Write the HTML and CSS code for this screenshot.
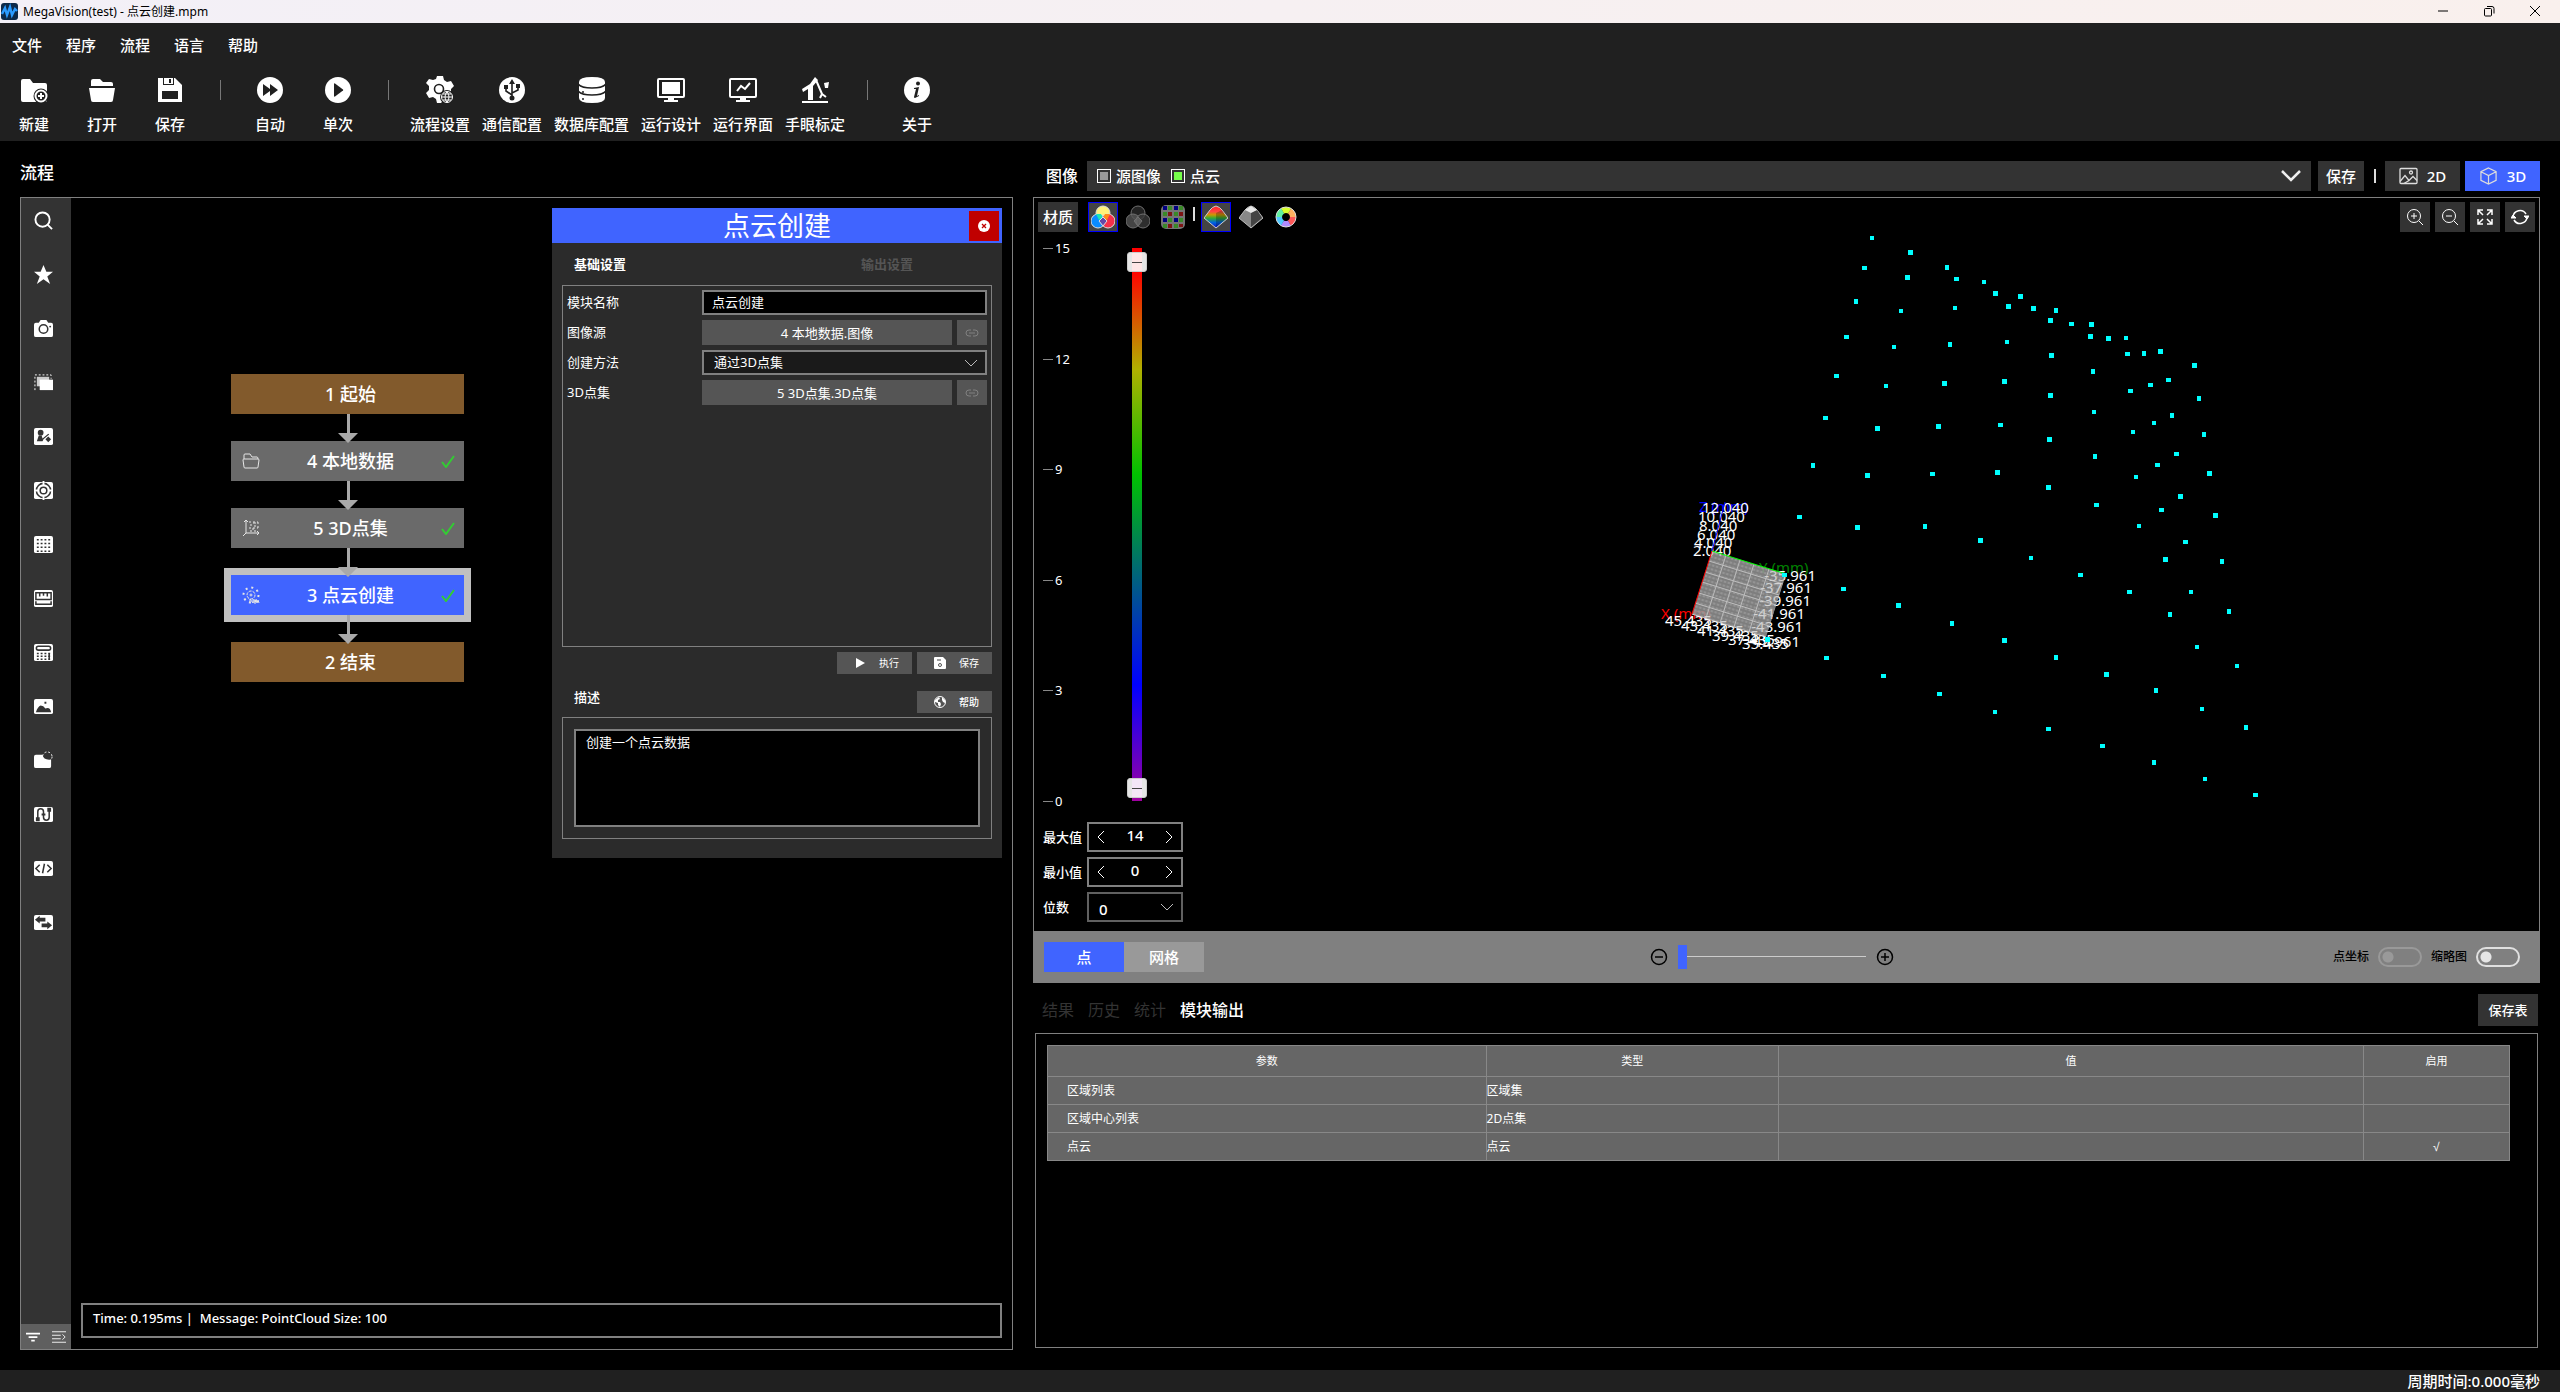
FILE: index.html
```html
<!DOCTYPE html>
<html lang="zh-CN">
<head>
<meta charset="UTF-8">
<meta name="viewport" content="width=device-width, initial-scale=1.0">
<title>MegaVision(test) - 点云创建.mpm</title>
<link rel="stylesheet" href="styles.css">
</head>
<body>
<div class="titlebar">
  <svg class="app-icon" viewBox="0 0 17 17"><rect width="17" height="17" rx="3" fill="#0d2a4a"/><path d="M1 11l3-6 2 7 3-8 2 8 3-6 2 2" fill="none" stroke="#2b9bff" stroke-width="2.4"/></svg>
  <span class="app-title">MegaVision(test) - 点云创建.mpm</span>
  <button class="win-btn" aria-label="最小化"><svg viewBox="0 0 12 12"><path d="M1 6h10"/></svg></button>
  <button class="win-btn" aria-label="还原"><svg viewBox="0 0 12 12"><rect x="1.500" y="3.500" width="7" height="7.500" rx="1"/><path d="M4 1.500h5q2 0 2 2v5"/></svg></button>
  <button class="win-btn" aria-label="关闭"><svg viewBox="0 0 12 12"><path d="M1 1l10 10M11 1L1 11"/></svg></button>
</div>

<header class="header">
  <nav class="menu">
    <button>文件</button><button>程序</button><button>流程</button><button>语言</button><button>帮助</button>
  </nav>
  <div class="toolbar">
    <button class="tool"><svg viewBox="0 0 28 28"><path class="f" d="M1 5q0-2 2-2h7l3 4h12q2 0 2 2v15q0 2-2 2H3q-2 0-2-2z"/><circle cx="21" cy="20" r="7.500" class="d"/><circle cx="21" cy="20" r="5.500" class="w2"/><path class="w2" d="M21 17v6M18 20h6"/></svg><span>新建</span></button>
    <button class="tool"><svg viewBox="0 0 28 28"><path class="f" d="M3 10V5q0-2 2-2h7l3 3h8q2 0 2 2v2zM1 12h26l-2 12q0 2-2 2H5q-2 0-2-2z"/></svg><span>打开</span></button>
    <button class="tool"><svg viewBox="0 0 28 28"><path class="f" d="M2 2h17l7 7v17H2z"/><path class="d" d="M7 2h11v7H7zM6 15h16v8H6z"/><path class="f" d="M8 2h9v6H8z"/><path class="d" d="M13 3h2v4h-2z"/></svg><span>保存</span></button>
    <i class="sep"></i>
    <button class="tool"><svg viewBox="0 0 28 28"><circle class="f" cx="14" cy="14" r="13"/><path class="d" d="M7 8l7 5V8l8 6-8 6v-5l-7 5z"/></svg><span>自动</span></button>
    <button class="tool"><svg viewBox="0 0 28 28"><circle class="f" cx="14" cy="14" r="13"/><path class="d" d="M10 8q0-1 1-.5l8 6q.5.5 0 1l-8 6q-1 .5-1-.5z"/></svg><span>单次</span></button>
    <i class="sep"></i>
    <button class="tool"><svg viewBox="0 0 28 28"><path class="f" d="M11 0h6l1 4 3 2 4-1 3 5-3 3v3l-10 11H11l-1-4-3-2-4 1-3-5 3-3v-4L0 7l3-4 4 1 3-1z"/><circle class="s" cx="13" cy="13" r="4.500"/><circle cx="21" cy="21" r="7" class="d"/><circle cx="21" cy="21" r="5.500" class="w"/><path class="w" d="M15.500 21h11M21 15.500q-4 5.500 0 11q4-5.500 0-11M17 18h8M17 24h8"/></svg><span>流程设置</span></button>
    <button class="tool"><svg viewBox="0 0 28 28"><circle class="f" cx="14" cy="14" r="13"/><path class="s" d="M14 5v18M14 19l-6-4v-4M14 17l6-3v-3"/><path class="d" d="M14 3l3 5h-6zM6 9h4v4H6zM18 8h4v4h-4z"/><circle class="d" cx="14" cy="22" r="2.500"/></svg><span>通信配置</span></button>
    <button class="tool"><svg viewBox="0 0 28 28"><path class="f" d="M1 6q0-5 13-5t13 5v16q0 5-13 5T1 22z"/><path class="s" d="M0 8q3 4 14 4t14-4M0 15q3 4 14 4t14-4"/><circle class="d" cx="5" cy="16" r="1"/><circle class="d" cx="5" cy="23" r="1"/></svg><span>数据库配置</span></button>
    <button class="tool"><svg viewBox="0 0 28 28"><rect class="w2" x="1" y="3" width="26" height="18" rx="1"/><path class="f" d="M5 6h18v12H5zM11 21h6v3h4v2H7v-2h4z"/></svg><span>运行设计</span></button>
    <button class="tool"><svg viewBox="0 0 28 28"><rect class="w2" x="1" y="3" width="26" height="18" rx="1"/><path class="w2" d="M8 15l4-5 4 3 5-6"/><path class="f" d="M11 21h6v3h4v2H7v-2h4z"/></svg><span>运行界面</span></button>
    <button class="tool"><svg viewBox="0 0 28 28"><path class="f" d="M14 1l3 3-5 6v14h-5V13l-5 3-1-3 8-5zM1 25h26v2H1z"/><path class="w2" d="M15 4l6 14M21 18l-2 4M21 18l4 3"/><path class="f" d="M23 7l5-1-1 6h-3z"/></svg><span>手眼标定</span></button>
    <i class="sep"></i>
    <button class="tool"><svg viewBox="0 0 28 28"><circle class="f" cx="14" cy="14" r="13"/><circle class="d" cx="15" cy="7.500" r="2"/><path class="d" d="M11 12l5-1-2 9 2-1v1l-4 2q-1 0-1-1l2-8h-2z"/></svg><span>关于</span></button>
  </div>
</header>

<main class="main">
  <section class="flow">
    <h2 class="heading">流程</h2>
    <div class="flow-frame">
      <aside class="side">
        <div class="side-tools">
          <button aria-label="搜索"><svg viewBox="0 0 20 20"><circle class="w2" cx="9" cy="9" r="7.500"/><path class="w2" d="M14 14l5 5"/></svg></button>
          <button aria-label="收藏"><svg viewBox="0 0 20 20"><path class="f" d="M10 0l3 7h7l-6 5 3 8-7-5-7 5 3-8-6-5h7z"/></svg></button>
          <button aria-label="相机"><svg viewBox="0 0 20 20"><path class="f" d="M2 4h3l2-3h6l2 3h3q2 0 2 2v11q0 2-2 2H2q-2 0-2-2V6q0-2 2-2z"/><circle class="s" cx="10" cy="10.500" r="4.500"/><circle class="d" cx="17" cy="8" r="1"/></svg></button>
          <button aria-label="区域"><svg viewBox="0 0 20 20"><path class="w dash" d="M1 18V2h17v4"/><path d="M3 4h13v10H3z" fill="#ccc"/><path class="f" d="M6 7h14v11H6z"/></svg></button>
          <button aria-label="标定"><svg viewBox="0 0 20 20"><rect class="f" y="1" width="20" height="18" rx="2"/><circle class="d" cx="7" cy="6" r="3"/><path class="d" d="M3 15l2-6h3l1 3 6-5 1 1-6 5-1 2zM15 10l3 3-3 3-3-3z"/></svg></button>
          <button aria-label="定位"><svg viewBox="0 0 20 20"><rect class="f" y="1" width="20" height="18" rx="2"/><circle class="s" cx="10" cy="10" r="7.500"/><circle class="s" cx="10" cy="10" r="3.500"/><path class="w2" d="M10 0v5M10 15v5M0 10h5M15 10h5"/></svg></button>
          <button aria-label="网格"><svg viewBox="0 0 20 20"><rect class="f" y="1" width="20" height="18" rx="2"/><path class="s dots" d="M3 5h15M3 9h15M3 13h15M3 17h15"/></svg></button>
          <button aria-label="测量"><svg viewBox="0 0 20 20"><rect class="f" y="1" width="20" height="18" rx="2"/><path class="s" d="M2 4h16v7H2zM2 13v3h16v-3M6 4v4M10 4v3M14 4v4"/></svg></button>
          <button aria-label="计算"><svg viewBox="0 0 20 20"><rect class="f" y="1" width="20" height="18" rx="2"/><rect class="s" x="2.500" y="3.500" width="15" height="4" rx="2"/><path class="s dots" d="M3 11h15M3 14h15M3 17h15"/><path class="s" d="M16 11v6"/></svg></button>
          <button aria-label="图像"><svg viewBox="0 0 20 20"><rect class="f" y="2" width="20" height="16" rx="2"/><path class="d" d="M2 16q2-6 5-7 3 0 5 3 5-2 6 4zM11 5h2v2h-2z"/></svg></button>
          <button aria-label="缺陷"><svg viewBox="0 0 20 20"><path class="f" d="M2 4h7q1 6 9 5v7q0 2-2 2H2q-2 0-2-2V6q0-2 2-2z"/><circle class="w dots" cx="14" cy="6" r="5"/></svg></button>
          <button aria-label="流程控制"><svg viewBox="0 0 20 20"><rect class="f" y="2" width="20" height="16" rx="2"/><path class="s" d="M4 15V7q0-3 3-3t3 3v6q0 3 3 3t3-3V5"/><path class="d" d="M2 13h4v4H2zM14 3h4v4h-4zM8 9h4v2H8z"/></svg></button>
          <button aria-label="脚本"><svg viewBox="0 0 20 20"><rect class="f" y="2" width="20" height="16" rx="2"/><path class="s" d="M6 6l-4 4 4 4M14 6l4 4-4 4M11 5l-2 10"/></svg></button>
          <button aria-label="通信"><svg viewBox="0 0 20 20"><rect class="f" y="2" width="20" height="16" rx="2"/><path class="d" d="M1 7l5-4v2h6v4H6v2zM19 13l-5-4v2H8v4h6v2z"/></svg></button>
        </div>
        <div class="side-foot">
          <button aria-label="筛选"><svg viewBox="0 0 16 16"><path class="w2" d="M0 4h16M3 8h10M6 12h4"/></svg></button>
          <button aria-label="展开"><svg viewBox="0 0 16 16"><path class="w" d="M0 2h16M0 6h10M0 10h10M0 14h16M12 5l3 3-3 3"/></svg></button>
        </div>
      </aside>
      <div class="canvas">
        <div class="nodes">
          <div class="node edge"><span>1 起始</span></div>
          <svg class="arrow" viewBox="0 0 20 29"><path d="M9 0h3v19h8L10 29 0 19h9z"/></svg>
          <div class="node"><svg class="node-icon" viewBox="0 0 18 18"><path d="M2 7V3q0-1 1-1h5l2 3h5q1 0 1 2M2 7h14q1 0 1 1l-1 7q0 1-1 1H3q-1 0-1-1L1 8q0-1 1-1z"/></svg><span>4 本地数据</span><svg class="tick" viewBox="0 0 14 13"><path d="M1 7l4 5L13 1"/></svg></div>
          <svg class="arrow" viewBox="0 0 20 29"><path d="M9 0h3v19h8L10 29 0 19h9z"/></svg>
          <div class="node"><svg class="node-icon" viewBox="0 0 18 18"><path d="M4 1v13h13M4 14l-3 3M2 3l2-2 2 2M15 12l2 2-2 2M8 6h2M12 7h2M10 10h2M11 4h3"/><path class="dots" d="M7 3h9M7 9h9M8 12h6M16 3v8"/></svg><span>5 3D点集</span><svg class="tick" viewBox="0 0 14 13"><path d="M1 7l4 5L13 1"/></svg></div>
          <svg class="arrow" viewBox="0 0 20 29"><path d="M9 0h3v19h8L10 29 0 19h9z"/></svg>
          <div class="node active"><svg class="node-icon" viewBox="0 0 18 18"><circle cx="9" cy="9" r="4" stroke-dasharray="3 1"/><circle cx="9" cy="9" r="1"/><circle cx="9" cy="9" r="7.500" stroke-width="2" stroke-dasharray="2 3.900"/><path d="M8 17v-4l3 4v-4M12 13v4h2M12 15h2M14 13l1 4 1-3 1 3"/></svg><span>3 点云创建</span><svg class="tick" viewBox="0 0 14 13"><path d="M1 7l4 5L13 1"/></svg></div>
          <svg class="arrow" viewBox="0 0 20 29"><path d="M9 0h3v19h8L10 29 0 19h9z"/></svg>
          <div class="node edge"><span>2 结束</span></div>
        </div>

        <div class="dialog">
          <div class="dialog-head">
            <h3>点云创建</h3>
            <button class="close" aria-label="关闭"><svg viewBox="0 0 12 12"><circle cx="6" cy="6" r="6" fill="#fff"/><path d="M4 4l4 4M8 4l-4 4" stroke="#c00000" stroke-width="1.300"/></svg></button>
          </div>
          <div class="dialog-tabs"><button class="on">基础设置</button><button>输出设置</button></div>
          <div class="form">
            <label for="modname">模块名称</label>
            <input id="modname" class="wide" type="text" value="点云创建">
            <label for="imgsrc">图像源</label>
            <button id="imgsrc" class="pick">4 本地数据.图像</button>
            <button class="link" aria-label="链接图像源"><svg viewBox="0 0 14 10"><path d="M6 2H4a3 3 0 0 0 0 6h2M8 2h2a3 3 0 0 1 0 6H8M4 5h6"/></svg></button>
            <label for="method">创建方法</label>
            <div class="select wide"><select id="method"><option>通过3D点集</option></select><svg viewBox="0 0 12 7"><path d="M0 0l6 6 6-6"/></svg></div>
            <label for="pointset">3D点集</label>
            <button id="pointset" class="pick">5 3D点集.3D点集</button>
            <button class="link" aria-label="链接3D点集"><svg viewBox="0 0 14 10"><path d="M6 2H4a3 3 0 0 0 0 6h2M8 2h2a3 3 0 0 1 0 6H8M4 5h6"/></svg></button>
          </div>
          <div class="actions">
            <button class="small"><svg viewBox="0 0 12 12"><path class="f" d="M2 1l9 5-9 5z"/></svg><span>执行</span></button>
            <button class="small"><svg viewBox="0 0 12 12"><path class="f" d="M0 1q0-1 1-1h8l3 3v8q0 1-1 1H1q-1 0-1-1z"/><path d="M3 3h4" stroke="#444"/><circle cx="6" cy="8" r="1.500" fill="none" stroke="#555"/></svg><span>保存</span></button>
          </div>
          <div class="desc-head">
            <label for="desc">描述</label>
            <button class="small"><svg viewBox="0 0 12 12"><circle cx="6" cy="6" r="5.500" fill="#555" stroke="#fff"/><path class="f" d="M1 4l4-3 1 2-2 1v2h2l1 2-1 3-2-2V7L1 6zM8 1l3 3v3L9 6 8 4z"/></svg><span>帮助</span></button>
          </div>
          <div class="desc"><textarea id="desc">创建一个点云数据</textarea></div>
        </div>

        <output class="message">Time: 0.195ms |&nbsp; Message: PointCloud Size: 100</output>
      </div>
    </div>
  </section>

  <section class="right">
    <div class="image-bar">
      <h2>图像</h2>
      <div class="layers">
        <label><input type="checkbox">源图像</label>
        <label><input type="checkbox" checked>点云</label>
        <button class="drop" aria-label="展开图层"><svg viewBox="0 0 20 12"><path d="M1 1l9 9 9-9"/></svg></button>
      </div>
      <button class="btn save">保存</button>
      <i class="bar"></i>
      <button class="btn mode"><svg viewBox="0 0 19 17"><rect x="1" y="1" width="17" height="15" rx="1"/><path d="M1 14l5-6 4 5 4-4 4 4M5 16l5-3"/><circle cx="12" cy="5" r="1.500"/></svg>2D</button>
      <button class="btn mode on"><svg viewBox="0 0 19 19"><path d="M9.500 1l8 4v9l-8 4-8-4V5zM1.500 5l8 4 8-4M9.500 9v9"/></svg>3D</button>
    </div>

    <div class="view">
      <!-- 点云与坐标轴 -->
      <svg class="cloud" viewBox="0 0 1505 733" preserveAspectRatio="xMidYMid meet">
        <defs>
          <pattern id="mesh" width="4" height="4" patternUnits="userSpaceOnUse" patternTransform="rotate(17)"><path d="M0 1h4M1 0v4M3 2v2" stroke="#999" stroke-width="1.400"/></pattern>
        </defs>
        <text x="665" y="314" fill="#0000ff">Z (mm)</text>
        <text x="725" y="375" fill="#008000">Y (mm)</text>
        <text x="627" y="421" fill="#ff0000">X (mm)</text>
        <path d="M678 353l74 23-20 63-74-23z" fill="url(#mesh)"/>
        <path d="M692 357l-20 63M706 362l-20 63M720 366l-20 63M735 371l-20 63M675 363l74 23M671 374l74 23M668 384l74 23M665 395l74 23M661 405l74 23M658 416l74 23" stroke="#ddd" fill="none"/>
        <g class="ticks">
          <text x="668" y="315">12.040</text><text x="664" y="324">10.040</text><text x="665" y="333">8.040</text><text x="663" y="342">6.040</text><text x="660" y="350">4.040</text><text x="659" y="358">2.040</text>
          <g text-anchor="end"><text x="782" y="383">-35.961</text><text x="778" y="395">-37.961</text><text x="777" y="408">-39.961</text><text x="771" y="421">-41.961</text><text x="769" y="434">-43.961</text><text x="766" y="449">-45.961</text></g>
          <text x="631" y="428">45.435</text><text x="647" y="433">43.435</text><text x="663" y="438">41.435</text><text x="678" y="443">39.435</text><text x="694" y="447">37.435</text><text x="708" y="451">35.435</text>
        </g>
        <path d="M678 353l74 23-20 63-74-23z" fill="url(#mesh)" fill-opacity=".6"/>
        <path d="M678 353l13-49" stroke="#0000ff"/><path d="M678 353l74 23" stroke="#00ff00"/><path d="M678 353l-20 63" stroke="#ff0000"/>
        <g transform="translate(606 12) scale(.421 .3827)">
          <path class="pts" d="M551 73h.1M643 111h.1M533 152h.1M729 150h.1M636 177h.1M752 180h.1M817 188h.1M845 218h.1M904 226h.1M513 239h.1M876 252h.1M748 256h.1M935 258h.1M988 262h.1M620 264h.1M975 288h.1M1025 298h.1M1073 299h.1M491 332h.1M1070 330h.1M1113 335h.1M1154 334h.1M872 345h.1M736 351h.1M603 358h.1M978 380h.1M1158 376h.1M1197 375h.1M1237 369h.1M1317 406h.1M1076 422h.1M467 434h.1M1256 444h.1M865 448h.1M723 453h.1M1213 457h.1M584 460h.1M1165 473h.1M975 484h.1M1328 492h.1M1078 528h.1M1264 537h.1M441 544h.1M1221 557h.1M857 562h.1M709 565h.1M564 571h.1M1171 580h.1M1340 586h.1M973 599h.1M1275 638h.1M1081 644h.1M411 667h.1M1229 666h.1M849 686h.1M1353 688h.1M695 690h.1M541 693h.1M1178 698h.1M970 725h.1M1284 748h.1M1084 771h.1M1239 784h.1M1367 798h.1M379 802h.1M677 827h.1M1185 826h.1M517 829h.1M808 863h.1M1296 867h.1M929 909h.1M1248 913h.1M1382 918h.1M1047 954h.1M343 954h.1M483 990h.1M1163 998h.1M1309 998h.1M614 1033h.1M1399 1049h.1M1259 1057h.1M741 1080h.1M303 1122h.1M866 1125h.1M1323 1142h.1M443 1171h.1M988 1169h.1M1418 1192h.1M1108 1213h.1M578 1218h.1M1226 1255h.1M711 1265h.1M1335 1304h.1M843 1312h.1M971 1356h.1M1439 1352h.1M1099 1401h.1M1221 1443h.1M1342 1487h.1M1462 1529h.1"/>
        </g>
      </svg>

      <div class="view-tools">
        <button class="btn material">材质</button>
        <button class="ico on" aria-label="彩色"><svg viewBox="0 0 24 24"><circle cx="12" cy="8" r="7" fill="#fff27a" stroke="#ddd"/><circle cx="7" cy="16" r="7" fill="#0a8cff" stroke="#ddd"/><circle cx="17" cy="16" r="7" fill="#f5304c" stroke="#ddd"/><path d="M5 9h5l2 4-4 2z" fill="#19e6b4"/><path d="M19 9h-5l-2 4 4 2z" fill="#ff8a1a"/><path d="M12 12l4 4-4 5-4-5z" fill="#6448a8" stroke="#ddd"/></svg></button>
        <button class="ico" aria-label="灰度"><svg viewBox="0 0 24 24"><g stroke="#707070" fill-opacity=".8"><circle cx="12" cy="8" r="7" fill="#2c2c2c"/><circle cx="7" cy="16" r="7" fill="#555"/><circle cx="17" cy="16" r="7" fill="#3a3a3a"/><path d="M12 12l4 4-4 5-4-5z" fill="#666"/></g></svg></button>
        <button class="ico" aria-label="纹理"><svg viewBox="0 0 24 24"><rect width="24" height="24" rx="5" fill="#757575"/><path fill="#000080" d="M2 1h4v4H2zM13 1h4v4h-4zM2 13h4v4H2zM13 13h4v4h-4z"/><path fill="#3a8a28" d="M7 1h4v4H7zM18 1h4v4h-4zM2 7h4v4H2zM13 7h4v4h-4zM7 13h4v4H7zM18 13h4v4h-4zM2 19h4v4H2zM13 19h4v4h-4z"/><path fill="#7d1414" d="M7 7h4v4H7zM18 7h4v4h-4zM7 19h4v4H7zM18 19h4v3h-4z"/></svg></button>
        <i class="bar"></i>
        <button class="ico on" aria-label="高度着色"><svg viewBox="0 0 24 24"><defs><linearGradient id="rb" x2="0" y2="1"><stop offset="0" stop-color="#f22"/><stop offset=".25" stop-color="#f44"/><stop offset=".4" stop-color="#c90"/><stop offset=".55" stop-color="#3a3"/><stop offset=".75" stop-color="#06d"/><stop offset="1" stop-color="#11c"/></linearGradient></defs><path d="M12 1q4 1 6 4l6 8-12 10L0 13l6-8q2-3 6-4z" fill="url(#rb)" stroke="#ccc"/><path d="M12 8v14l11-9-5-8z" fill="#000" opacity=".25"/></svg></button>
        <button class="ico" aria-label="灰度高度"><svg viewBox="0 0 24 24"><path d="M12 1q4 1 6 4l6 8-12 10L0 13l6-8q2-3 6-4z" fill="#888" stroke="#bbb"/><path d="M12 7v15l11-9-5-8z" fill="#444"/><path d="M12 1l6 4-6 3-6-3z" fill="#e8e8e8"/></svg></button>
        <button class="ico" aria-label="色环"><svg viewBox="0 0 24 24"><g fill="none" stroke-width="6" stroke-dasharray="7.500 60"><circle cx="12" cy="12" r="7" stroke="#ff5858"/><circle cx="12" cy="12" r="7" stroke="#b08cff" stroke-dashoffset="-7.300"/><circle cx="12" cy="12" r="7" stroke="#50c8ff" stroke-dashoffset="-14.600"/><circle cx="12" cy="12" r="7" stroke="#60f0a0" stroke-dashoffset="-21.900"/><circle cx="12" cy="12" r="7" stroke="#d8ff30" stroke-dashoffset="-29.200"/><circle cx="12" cy="12" r="7" stroke="#ffb060" stroke-dashoffset="-36.500"/></g><circle cx="12" cy="12" r="10" fill="none" stroke="#ddd"/></svg></button>
        <div class="view-right">
          <button class="btn sq" aria-label="放大"><svg viewBox="0 0 18 18"><circle cx="8" cy="8" r="6.500"/><path d="M13 13l4 4M5 8h6M8 5v6"/></svg></button>
          <button class="btn sq" aria-label="缩小"><svg viewBox="0 0 18 18"><circle cx="8" cy="8" r="6.500"/><path d="M13 13l4 4M5 8h6"/></svg></button>
          <button class="btn sq" aria-label="适应窗口"><svg viewBox="0 0 18 18"><path d="M2 7V2h5M11 2h5v5M16 11v5h-5M7 16H2v-5M2 2l5 5M16 2l-5 5M16 16l-5-5M2 16l5-5" stroke-width="1.500"/></svg></button>
          <button class="btn sq" aria-label="刷新"><svg viewBox="0 0 18 18"><path d="M2 9a7 7 0 0 1 13-3M16 9a7 7 0 0 1-13 3" stroke-width="1.500"/><path class="f" d="M13 8h5l-2 3zM0 10h5L2 7z"/></svg></button>
        </div>
      </div>

      <div class="range-area">
        <div class="scale"><span>15</span><span>12</span><span>9</span><span>6</span><span>3</span><span>0</span></div>
        <div class="ramp">
          <input type="range" min="0" max="14" value="14" aria-label="最大值滑块">
          <input type="range" min="0" max="14" value="0" aria-label="最小值滑块">
        </div>
      </div>

      <div class="limits">
        <label for="vmax">最大值</label>
        <div class="spin"><button aria-label="减小最大值"><svg viewBox="0 0 7 12"><path d="M6 0L0 6l6 6"/></svg></button><input id="vmax" type="text" value="14"><button aria-label="增大最大值"><svg viewBox="0 0 7 12"><path d="M0 0l6 6-6 6"/></svg></button></div>
        <label for="vmin">最小值</label>
        <div class="spin"><button aria-label="减小最小值"><svg viewBox="0 0 7 12"><path d="M6 0L0 6l6 6"/></svg></button><input id="vmin" type="text" value="0"><button aria-label="增大最小值"><svg viewBox="0 0 7 12"><path d="M0 0l6 6-6 6"/></svg></button></div>
        <label for="digits">位数</label>
        <div class="select digits"><select id="digits"><option>0</option></select><svg viewBox="0 0 12 7"><path d="M0 0l6 6 6-6"/></svg></div>
      </div>

      <div class="view-foot">
        <div class="seg"><button class="on">点</button><button>网格</button></div>
        <div class="zoom">
          <button aria-label="减小点大小"><svg viewBox="0 0 18 18"><circle cx="9" cy="9" r="7.500"/><path d="M5 9h8"/></svg></button>
          <input type="range" min="1" max="20" value="1" aria-label="点大小">
          <button aria-label="增大点大小"><svg viewBox="0 0 18 18"><circle cx="9" cy="9" r="7.500"/><path d="M5 9h8M9 5v8"/></svg></button>
        </div>
        <div class="toggles">
          <label for="coord">点坐标</label><input id="coord" type="checkbox" disabled>
          <label for="thumb">缩略图</label><input id="thumb" type="checkbox">
        </div>
      </div>
    </div>

    <div class="out-tabs">
      <button>结果</button><button>历史</button><button>统计</button><button class="on">模块输出</button>
      <button class="btn save-table">保存表</button>
    </div>
    <div class="out">
      <table>
        <thead><tr><th>参数</th><th>类型</th><th>值</th><th>启用</th></tr></thead>
        <tbody>
          <tr><td>区域列表</td><td>区域集</td><td></td><td></td></tr>
          <tr><td>区域中心列表</td><td>2D点集</td><td></td><td></td></tr>
          <tr><td>点云</td><td>点云</td><td></td><td>√</td></tr>
        </tbody>
      </table>
    </div>
  </section>
</main>

<footer class="status">周期时间:0.000毫秒</footer>
</body>
</html>
```

FILE: styles.css
```css
* {
  box-sizing: border-box;
}

body {
  margin: 0;
  min-height: 100vh;
  display: flex;
  flex-direction: column;
  background: #000;
  color: #fff;
  font: 13px/18px "Noto Sans", "Noto Sans CJK SC", sans-serif;
}

button, input, select, textarea {
  font: inherit;
  color: inherit;
  margin: 0;
  padding: 0;
  border: 0;
  background: none;
}

h2, h3 {
  margin: 0;
}

svg {
  display: block;
}

/* 图标通用 */
.f { fill: #fff; }
.d { fill: #202020; }
.s { fill: none; stroke: #202020; stroke-width: 1.6; }
.w { fill: none; stroke: #fff; }
.w2 { fill: none; stroke: #fff; stroke-width: 2; }
.dash { stroke-dasharray: 2 2; }
.dots { stroke-dasharray: 2 2; }

/* 标题栏 */
.titlebar {
  height: 23px;
  padding-right: 2px;
  display: flex;
  align-items: center;
  background: linear-gradient(90deg, #f3f0f7, #f9f0ed);
  color: #000;
  font-size: 12px;
}

.app-icon {
  width: 17px;
  height: 17px;
  margin: 0 5px 0 1px;
}

.app-title {
  flex: 1;
}

.win-btn {
  width: 46px;
  height: 21px;
  align-self: flex-start;
  display: flex;
  align-items: center;
  justify-content: center;
}

.win-btn svg {
  width: 12px;
  height: 12px;
  fill: none;
  stroke: #000;
}

/* 菜单和工具栏 */
.header {
  height: 118px;
  background: #202020;
  font-size: 15px;
  font-weight: 500;
}

.menu {
  display: flex;
  gap: 24px;
  padding: 12px 12px 0;
}

.menu button {
  height: 20px;
}

.toolbar {
  display: flex;
  padding-top: 21px;
}

.tool {
  min-width: 68px;
  padding: 0 6px;
  display: flex;
  flex-direction: column;
  align-items: center;
  gap: 11px;
}

.tool svg {
  width: 28px;
  height: 28px;
}

.sep {
  width: 1px;
  height: 20px;
  margin: 4px 15px 0 16px;
  background: #777;
}

/* 主体 */
.main {
  flex: 1;
  display: grid;
  grid-template-columns: 993fr 1507fr;
  gap: 20px;
  padding: 20px 20px 0;
}

.flow, .right {
  display: flex;
  flex-direction: column;
  min-width: 0;
}

.flow {
  padding-bottom: 20px;
}

.heading {
  height: 36px;
  line-height: 24px;
  font-size: 17px;
  font-weight: 500;
}

.flow-frame {
  flex: 1;
  display: flex;
  border: 1px solid #808080;
}

.side {
  width: 50px;
  display: flex;
  flex-direction: column;
  justify-content: space-between;
  background: #333;
}

.side-tools {
  padding-top: 12px;
  display: grid;
  grid-auto-rows: 20px;
  row-gap: 34px;
}

.side-tools button {
  padding-left: 13px;
}

.side-tools svg {
  width: 19px;
  height: 19px;
}

.side-tools .d { fill: #333; }
.side-tools .s { stroke: #333; }

.side-foot {
  height: 25px;
  padding: 0 4px;
  display: flex;
  align-items: center;
  justify-content: space-between;
  background: #5f5f5f;
}

.side-foot svg {
  width: 16px;
  height: 14px;
}

.canvas {
  flex: 1;
  position: relative;
}

.nodes {
  position: absolute;
  left: 160px;
  top: 176px;
  width: 233px;
  display: flex;
  flex-direction: column;
}

.node {
  height: 40px;
  display: flex;
  align-items: center;
  padding: 0 9px 0 11px;
  background: #6a6a6a;
  font-size: 18px;
  font-weight: 500;
}

.node span {
  flex: 1;
  text-align: center;
}

.node.edge {
  background: #825a2c;
}

.node.edge span {
  padding-left: 4px;
}

.node.active {
  background: #4064ff;
  box-shadow: 0 0 0 7px #c0c0c0;
}

.node-icon {
  width: 18px;
  height: 18px;
  fill: none;
  stroke: #e6e6e6;
}

.tick {
  width: 14px;
  height: 13px;
  fill: none;
  stroke: #32cd32;
  stroke-width: 2;
}

.arrow {
  width: 20px;
  height: 29px;
  margin: 0 auto -2px;
  fill: #a9a9a9;
  position: relative;
  z-index: 1;
}

.message {
  position: absolute;
  left: 10px;
  right: 10px;
  bottom: 11px;
  height: 35px;
  padding: 4px 10px;
  border: 2px solid #808080;
  font-weight: 500;
}

/* 模块设置窗口 */
.dialog {
  position: absolute;
  right: 10px;
  top: 10px;
  width: 450px;
  height: 650px;
  padding: 0 10px;
  background: #2b2b2b;
}

.dialog-head {
  height: 35px;
  margin: 0 -10px;
  padding: 0 3px 0 33px;
  display: flex;
  align-items: center;
  background: #4064ff;
}

.dialog-head h3 {
  flex: 1;
  text-align: center;
  font-size: 27px;
  line-height: 35px;
  font-weight: 400;
}

.close {
  width: 30px;
  height: 30px;
  background: #c00000;
}

.close svg {
  width: 12px;
  height: 12px;
  margin: auto;
}

.dialog-tabs {
  height: 42px;
  display: flex;
  justify-content: space-between;
  padding: 0 79px 0 12px;
  font-weight: 700;
  color: #555;
}

.dialog-tabs .on {
  color: #fff;
}

.form {
  height: 362px;
  padding: 4px;
  border: 1px solid #808080;
  display: grid;
  grid-template-columns: 135px 1fr 30px;
  grid-auto-rows: 25px;
  gap: 5px 0;
  align-content: start;
  align-items: stretch;
}

.form label {
  line-height: 25px;
}

.wide {
  grid-column: 2 / 4;
  border: 2px solid #808080;
}

input.wide {
  min-width: 0;
  padding: 0 8px 2px;
  background: #000;
}

.pick {
  margin-right: 5px;
  background: #555;
}

.link {
  background: #555;
}

.link svg {
  width: 14px;
  height: 10px;
  margin: auto;
  fill: none;
  stroke: #808080;
}

.select {
  position: relative;
}

.select select {
  display: block;
  width: 100%;
  height: 100%;
  padding: 0 10px 2px;
  appearance: none;
  background: #1a1a1a;
}

.select svg {
  position: absolute;
  right: 8px;
  top: 50%;
  margin-top: -3px;
  width: 12px;
  height: 7px;
  fill: none;
  stroke: #bbb;
}

.actions {
  display: flex;
  justify-content: flex-end;
  gap: 5px;
  padding-top: 5px;
}

.small {
  width: 75px;
  height: 22px;
  padding: 0 13px 0 17px;
  display: flex;
  align-items: center;
  justify-content: space-between;
  background: #555;
  font-size: 10px;
}

.small svg {
  width: 12px;
  height: 12px;
}

.desc-head {
  display: flex;
  justify-content: space-between;
  padding: 17px 0 4px 12px;
  line-height: 13px;
  font-weight: 500;
}

.desc {
  height: 122px;
  padding: 11px;
  border: 1px solid #808080;
}

.desc textarea {
  display: block;
  width: 100%;
  height: 98px;
  padding: 2px 10px;
  border: 2px solid #808080;
  background: #000;
  resize: none;
}

/* 图像栏 */
.image-bar {
  display: flex;
  height: 30px;
  margin-bottom: 6px;
  align-items: center;
  font-size: 15px;
  font-weight: 500;
}

.image-bar h2 {
  width: 54px;
  padding-left: 13px;
  font-size: 16px;
  font-weight: 500;
}

.layers {
  flex: 1;
  height: 30px;
  padding: 0 10px;
  display: flex;
  align-items: center;
  gap: 10px;
  background: #333;
}

.layers label {
  display: flex;
  align-items: center;
  gap: 5px;
}

.layers input {
  appearance: none;
  width: 14px;
  height: 14px;
  border: 1px solid #fff;
  background: #9a9a9a content-box;
  padding: 2px;
}

.layers input:checked {
  background-color: #76ff4a;
}

.drop {
  margin-left: auto;
}

.drop svg {
  width: 20px;
  height: 12px;
  fill: none;
  stroke: #eee;
  stroke-width: 2.5;
}

.btn {
  height: 30px;
  background: #333;
  font-size: 15px;
  font-weight: 500;
}

.save {
  width: 46px;
  margin-left: 7px;
}

.bar {
  width: 2px;
  height: 14px;
  background: #ddd;
}

.image-bar .bar {
  margin: 0 9px 0 10px;
}

.mode {
  width: 75px;
  display: flex;
  align-items: center;
  justify-content: center;
  gap: 9px;
}

.mode svg {
  width: 19px;
  height: 18px;
  fill: none;
  stroke: #ddd;
  stroke-width: 1.3;
}

.mode.on {
  margin-left: 5px;
  background: #4064ff;
}

/* 3D 视图 */
.view {
  position: relative;
  border: 1px solid #808080;
  display: flex;
  flex-direction: column;
}

.cloud {
  position: absolute;
  left: 0;
  top: 0;
  width: 100%;
  height: 733px;
  font-size: 15px;
}

.ticks {
  fill: #fff;
}

.pts {
  stroke: #00ffff;
  stroke-width: 4.6;
  stroke-linecap: square;
  vector-effect: non-scaling-stroke;
  shape-rendering: crispEdges;
}

.view-tools {
  position: relative;
  display: flex;
  gap: 5px;
  padding: 4px;
}

.material {
  width: 40px;
  margin-right: 5px;
}

.ico {
  width: 30px;
  height: 30px;
}

.ico.on {
  border: 1px solid #0000ff;
  background: #444;
}

.ico svg {
  width: 24px;
  height: 24px;
  margin: auto;
}

.view-tools .bar {
  margin: 5px 1px 0 0;
}

.view-right {
  display: flex;
  gap: 5px;
  margin-left: auto;
}

.sq {
  width: 30px;
}

.sq svg {
  width: 18px;
  height: 18px;
  margin: auto;
  fill: none;
  stroke: #fff;
}

.range-area {
  position: relative;
  display: flex;
  gap: 59px;
  padding: 0 9px;
}

.scale {
  width: 30px;
  height: 577px;
  display: flex;
  flex-direction: column;
  justify-content: space-between;
  line-height: 24px;
}

.scale span::before {
  content: "";
  display: inline-block;
  width: 10px;
  height: 1px;
  margin-right: 2px;
  vertical-align: 4px;
  background: #888;
}

.ramp {
  position: relative;
  width: 10px;
  height: 553px;
  margin-top: 12px;
  background: linear-gradient(#ff0000 4%, #b0b000 22%, #00c000 41%, #0000ff 79%, #a000a0);
}

.ramp input {
  position: absolute;
  left: -5px;
  top: 4px;
  width: 20px;
  height: 546px;
  writing-mode: vertical-lr;
  direction: rtl;
  appearance: none;
  pointer-events: none;
}

.ramp input::-webkit-slider-thumb {
  appearance: none;
  width: 20px;
  height: 20px;
  border: 1px solid #ccc;
  border-radius: 3px;
  background: linear-gradient(#444, #444) center / 10px 1px no-repeat, rgba(255, 255, 255, 0.9);
  pointer-events: auto;
}

.limits {
  position: relative;
  display: grid;
  grid-template-columns: 44px 96px;
  grid-auto-rows: 30px;
  gap: 5px 0;
  padding: 9px;
  line-height: 30px;
  font-weight: 500;
}

.spin {
  display: flex;
  border: 2px solid #808080;
}

.spin button {
  width: 24px;
}

.spin svg {
  width: 7px;
  height: 12px;
  margin: auto;
  fill: none;
  stroke: #fff;
}

.spin input {
  flex: 1;
  min-width: 0;
  height: 22px;
  text-align: center;
  font-size: 15px;
}

.digits {
  border: 2px solid #606060;
}

.digits select {
  background: #000;
  font-size: 15px;
}

.view-foot {
  position: relative;
  display: grid;
  grid-template-columns: 1fr auto 1fr;
  align-items: center;
  height: 51px;
  padding: 0 19px 0 10px;
  background: #808080;
}

.seg button {
  width: 80px;
  height: 30px;
  background: #999;
  font-size: 15px;
  font-weight: 500;
}

.seg {
  display: flex;
}

.seg .on {
  background: #4064ff;
}

.zoom {
  display: flex;
  align-items: center;
  gap: 10px;
  margin-right: 20px;
}

.zoom svg {
  width: 18px;
  height: 18px;
  fill: none;
  stroke: #000;
  stroke-width: 1.5;
}

.zoom input {
  width: 188px;
  height: 24px;
  appearance: none;
  background: linear-gradient(#ccc, #ccc) center / 100% 1px no-repeat;
}

.zoom input::-webkit-slider-thumb {
  appearance: none;
  width: 9px;
  height: 24px;
  background: #4064ff;
}

.toggles {
  display: flex;
  align-items: center;
  justify-content: flex-end;
  gap: 9px;
  color: #000;
  font-size: 12px;
  font-weight: 500;
}

.toggles input {
  appearance: none;
  width: 44px;
  height: 20px;
  border: 2px solid #e0e0e0;
  border-radius: 10px;
  background: radial-gradient(circle at 8px 8px, #e6e6e6 5px, transparent 6px);
}

.toggles input:disabled {
  border-color: #999;
  background: radial-gradient(circle at 8px 8px, #999 5px, transparent 6px);
}

/* 输出表 */
.out-tabs {
  display: flex;
  align-items: center;
  gap: 14px;
  height: 50px;
  padding: 3px 2px 0 9px;
  font-size: 16px;
  color: #333;
}

.out-tabs .on {
  color: #fff;
  font-weight: 500;
}

.out-tabs .save-table {
  width: 60px;
  height: 32px;
  margin-left: auto;
  color: #fff;
  font-size: 13px;
}

.out {
  flex: 1;
  margin: 0 2px 22px;
  padding: 11px 27px 11px 11px;
  border: 1px solid #808080;
}

.out table {
  width: 100%;
  table-layout: fixed;
  border-collapse: collapse;
  background: #666;
  font-size: 12px;
}

.out th, .out td {
  height: 28px;
  padding: 0;
  border: 1px solid #888;
  text-align: left;
}

.out th {
  height: 31px;
  text-align: center;
  font-size: 11px;
  font-weight: 400;
}

.out th:nth-child(1) { width: 30%; }
.out th:nth-child(2) { width: 20%; }
.out th:nth-child(3) { width: 40%; }
.out th:nth-child(4) { width: 10%; }

.out td:first-child {
  padding-left: 19px;
}

.out td:last-child {
  text-align: center;
  font-family: "Liberation Sans", sans-serif;
}

.status {
  height: 22px;
  padding: 0 20px;
  line-height: 22px;
  text-align: right;
  background: #202020;
  font-size: 15px;
  font-weight: 500;
}
```
